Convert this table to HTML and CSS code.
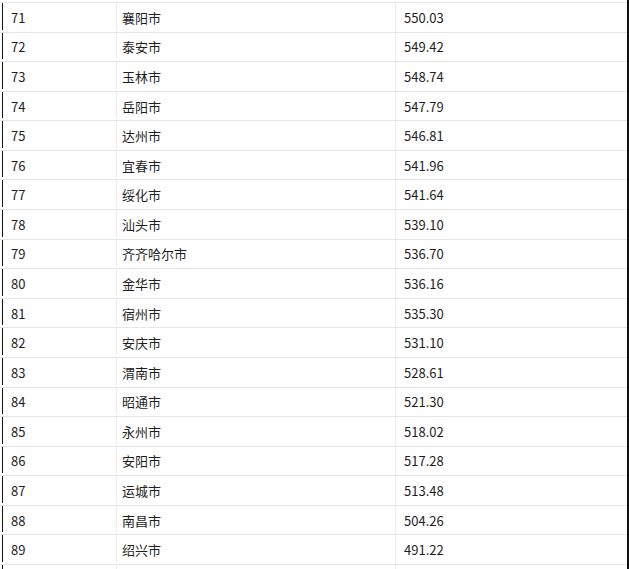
FILE: index.html
```html
<!DOCTYPE html>
<html lang="zh-CN">
<head>
<meta charset="utf-8">
<title>城市排名</title>
<link rel="stylesheet" href="styles.css">
</head>
<body>
<div class="table">
  <div class="row"><div class="c c1">71</div><div class="c c2">襄阳市</div><div class="c c3">550.03</div></div>
  <div class="row"><div class="c c1">72</div><div class="c c2">泰安市</div><div class="c c3">549.42</div></div>
  <div class="row"><div class="c c1">73</div><div class="c c2">玉林市</div><div class="c c3">548.74</div></div>
  <div class="row"><div class="c c1">74</div><div class="c c2">岳阳市</div><div class="c c3">547.79</div></div>
  <div class="row"><div class="c c1">75</div><div class="c c2">达州市</div><div class="c c3">546.81</div></div>
  <div class="row"><div class="c c1">76</div><div class="c c2">宜春市</div><div class="c c3">541.96</div></div>
  <div class="row"><div class="c c1">77</div><div class="c c2">绥化市</div><div class="c c3">541.64</div></div>
  <div class="row"><div class="c c1">78</div><div class="c c2">汕头市</div><div class="c c3">539.10</div></div>
  <div class="row"><div class="c c1">79</div><div class="c c2">齐齐哈尔市</div><div class="c c3">536.70</div></div>
  <div class="row"><div class="c c1">80</div><div class="c c2">金华市</div><div class="c c3">536.16</div></div>
  <div class="row"><div class="c c1">81</div><div class="c c2">宿州市</div><div class="c c3">535.30</div></div>
  <div class="row"><div class="c c1">82</div><div class="c c2">安庆市</div><div class="c c3">531.10</div></div>
  <div class="row"><div class="c c1">83</div><div class="c c2">渭南市</div><div class="c c3">528.61</div></div>
  <div class="row"><div class="c c1">84</div><div class="c c2">昭通市</div><div class="c c3">521.30</div></div>
  <div class="row"><div class="c c1">85</div><div class="c c2">永州市</div><div class="c c3">518.02</div></div>
  <div class="row"><div class="c c1">86</div><div class="c c2">安阳市</div><div class="c c3">517.28</div></div>
  <div class="row"><div class="c c1">87</div><div class="c c2">运城市</div><div class="c c3">513.48</div></div>
  <div class="row"><div class="c c1">88</div><div class="c c2">南昌市</div><div class="c c3">504.26</div></div>
  <div class="row"><div class="c c1">89</div><div class="c c2">绍兴市</div><div class="c c3">491.22</div></div>
  <div class="row"><div class="c c1"></div><div class="c c2"></div><div class="c c3"></div></div>
</div>
</body>
</html>
```
FILE: styles.css
```css
html, body {
  margin: 0;
  padding: 0;
  background: #fff;
  overflow: hidden;
}
body {
  font-family: "Noto Sans CJK SC", "DejaVu Sans", sans-serif;
  font-size: 13px;
  color: #1e1e1e;
}
.table {
  width: 627px;
  border-right: 2px solid #111;
  padding-top: 2px;
}
.row {
  display: grid;
  grid-template-columns: 117px 279px 1fr;
  height: 29.58px;
  box-sizing: border-box;
  border-top: 1px solid #e6e6e6;
}
.c {
  display: flex;
  align-items: center;
  line-height: 1;
}
.c1 {
  margin-left: 2px;
  margin-bottom: 2px;
  border-left: 1px solid #111;
  border-right: 1px solid #ececec;
  padding-left: 8px;
  padding-top: 2px;
}
.c2 {
  border-right: 1px solid #ececec;
  padding-left: 5px;
}
.c3 {
  padding-left: 8px;
  margin-right: 1px;
}
```
